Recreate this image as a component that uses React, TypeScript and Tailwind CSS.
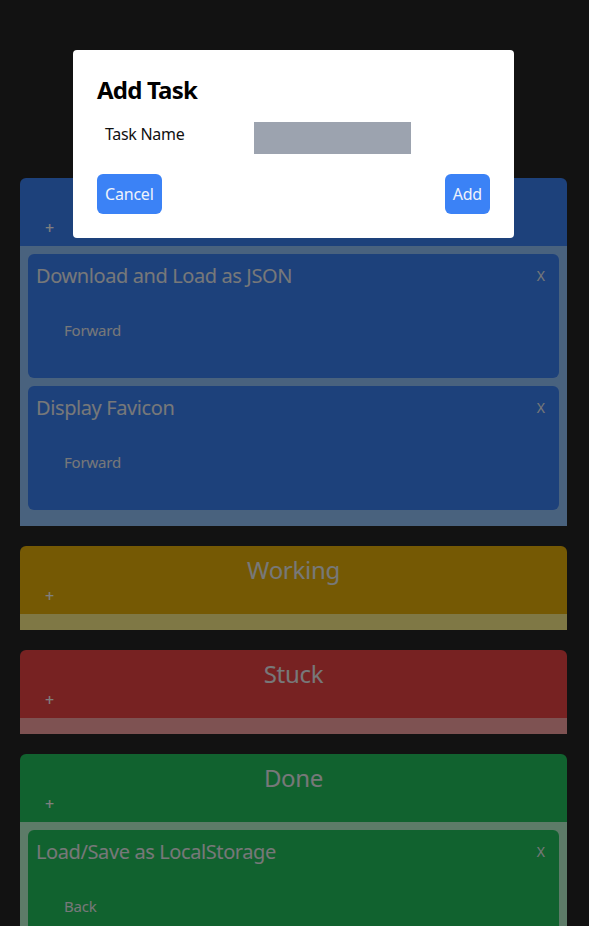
import React from 'react';

type Task = { id: number; title: string; action: string };

type Column = {
  id: string;
  title: string;
  header: string;
  body: string;
  tasks: Task[];
};

const columns: Column[] = [
  {
    id: 'todo',
    title: 'To Do',
    header: 'bg-[#3b82f6]',
    body: 'bg-[#93c5fd]',
    tasks: [
      { id: 1, title: 'Download and Load as JSON', action: 'Forward' },
      { id: 2, title: 'Display Favicon', action: 'Forward' },
    ],
  },
  { id: 'working', title: 'Working', header: 'bg-[#eab308]', body: 'bg-[#fef08a]', tasks: [] },
  { id: 'stuck', title: 'Stuck', header: 'bg-[#ef4444]', body: 'bg-[#fca5a5]', tasks: [] },
  {
    id: 'done',
    title: 'Done',
    header: 'bg-[#22c55e]',
    body: 'bg-[#bbf7d0]',
    tasks: [{ id: 3, title: 'Load/Save as LocalStorage', action: 'Back' }],
  },
];

const TaskCard: React.FC<{ task: Task; bg: string }> = ({ task, bg }) => (
  <div className={`mb-2 h-[124px] rounded-md ${bg} pl-2 pr-[14px] pt-2`}>
    <div className="flex items-center justify-between">
      <span className="text-xl leading-7 tracking-[-0.4px] text-[#eef0f3]">{task.title}</span>
      <span className="text-sm text-[#eef0f3]">X</span>
    </div>
    <div className="mt-[30px] pl-7 text-[15px] leading-5 tracking-[-0.2px] text-[#eef0f3]">{task.action}</div>
  </div>
);

export default function App() {
  return (
    <div className="min-h-screen bg-[#242424] pl-5 pr-[22px] pt-[178px] pb-5 font-['Noto_Sans',sans-serif]">
      <div className="flex flex-col gap-5">
        {columns.map((col) => (
          <div key={col.id}>
            <div className={`rounded-t-md ${col.header} pt-2 pb-2`}>
              <div className="text-center text-2xl leading-8 tracking-[-0.3px] text-[#eef0f3]">{col.title}</div>
              <div className="ml-[25px] text-base leading-5 font-medium text-white">+</div>
            </div>
            <div className={`${col.body} p-2`}>
              {col.tasks.map((t) => (
                <TaskCard key={t.id} task={t} bg={col.header} />
              ))}
            </div>
          </div>
        ))}
      </div>

      {/* modal */}
      <div className="fixed inset-0 bg-black/50" />
      <div className="fixed left-[73px] top-[50px] w-[441px] rounded bg-white px-6 pt-6 pb-6">
        <h2 className="text-2xl leading-8 font-bold tracking-[-0.8px] text-black">Add Task</h2>
        <div className="mt-4 flex items-start">
          <label className="w-[157px] pl-2 text-base leading-6 tracking-[-0.3px] text-[#111]">Task Name</label>
          <input className="h-8 w-[157px] bg-[#9ca3af] outline-none" />
        </div>
        <div className="mt-5 flex justify-between">
          <button className="h-10 rounded-md bg-[#3b82f6] px-2 text-base tracking-[-0.2px] text-[#eef2fb]">Cancel</button>
          <button className="h-10 rounded-md bg-[#3b82f6] px-2 text-base tracking-[-0.2px] text-[#eef2fb]">Add</button>
        </div>
      </div>
    </div>
  );
}
